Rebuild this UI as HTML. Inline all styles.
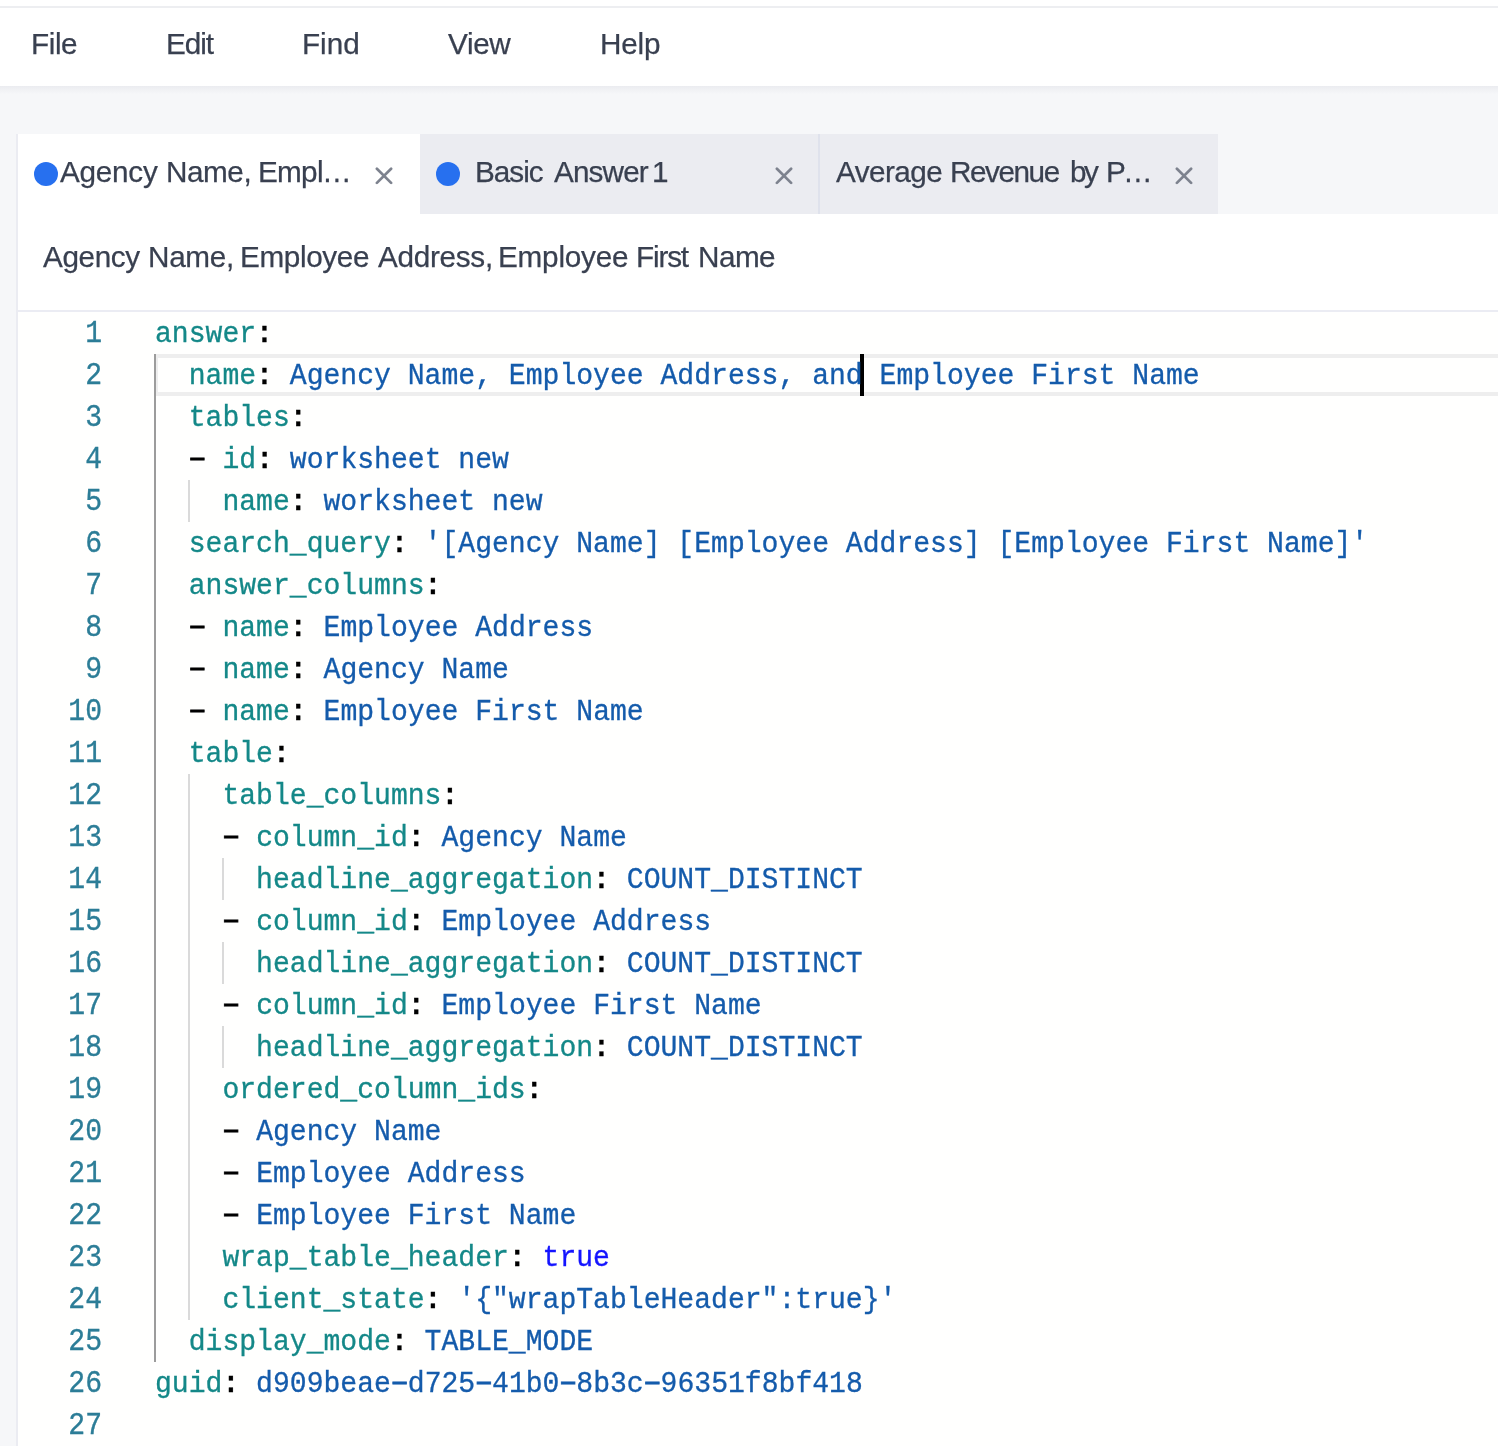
<!DOCTYPE html>
<html><head><meta charset="utf-8"><title>TML Editor</title>
<style>
html,body{margin:0;padding:0}
body{width:1498px;height:1446px;overflow:hidden;position:relative;background:#f6f7f9;font-family:"Liberation Sans",sans-serif;color:#363c4a}
div{position:absolute;box-sizing:border-box}
.menubar{left:0;top:0;width:1498px;height:86px;background:#fff}
.topline{left:0;top:6px;width:1498px;height:2px;background:#edeef1}
.menushadow{left:0;top:86px;width:1498px;height:8px;background:linear-gradient(#ebecf0,#f6f7f9)}
.panel{left:18px;top:214px;width:1480px;height:1232px;background:#fff}
.lborder{left:16px;top:134px;width:2px;height:1312px;background:#ebecf2}
.tab{top:134px;height:80px;background:#ebecf1}
.tab.act{background:#fff}
.dot{width:24px;height:24px;border-radius:50%;background:#2770ef;top:162px}
.tdiv{left:818px;top:134px;width:2px;height:80px;background:#dfe2ec}
.hline{left:18px;top:310px;width:1480px;height:2px;background:#ebecf3}
.edbg{left:18px;top:312px;width:1480px;height:1134px;background:#fffffe}
svg.x{position:absolute;width:18px;height:18px}
.curline{left:154px;top:354px;width:1344px;height:42px;border:4px solid #eeeeee;border-right:0}
.cursor{left:860px;top:354px;width:4px;height:42px;background:#000}
.g{width:2px}
.ga{background:#9c9c9c}
.gn{background:#dadada}
.sw,.ln,.cl{will-change:transform}
.sw{height:40px;line-height:40px;font-size:29.7px;white-space:pre;color:#394050;-webkit-text-stroke:.25px}
.ln,.cl{font-family:"Liberation Mono",monospace;font-size:28.09px;line-height:42px;height:42px;white-space:pre;transform:translateY(1.6px) scaleY(1.07);transform-origin:0 28.5px;-webkit-text-stroke:0.3px}
.ln{left:41px;width:61px;text-align:right;color:#2c7d97;transform:translateY(1.6px) scaleY(1.14)}
.cl{left:154.5px;color:#000}
.k{color:#148888}.s{color:#145bab}.w{color:#1414ff}.p{color:#000;font-weight:bold}
.cl i{font-style:normal;font-weight:normal;position:relative;top:1.4px;-webkit-text-stroke:.8px}

</style></head>
<body>
<div class="menubar"></div>
<div class="topline"></div>
<div class="menushadow"></div>
<div class="lborder"></div>
<div class="tab act" style="left:18px;width:402px"></div>
<div class="tab" style="left:420px;width:798px"></div>
<div class="tdiv"></div>
<div class="dot" style="left:34px"></div>
<svg class="x" style="left:375.3px;top:167px" viewBox="0 0 18 18"><path d="M1.9 1.7 L16.1 15.9 M16.1 1.7 L1.9 15.9" stroke="#7d828e" stroke-width="2.7" stroke-linecap="round" fill="none"/></svg>
<div class="dot" style="left:436px"></div>
<svg class="x" style="left:775.3px;top:167px" viewBox="0 0 18 18"><path d="M1.9 1.7 L16.1 15.9 M16.1 1.7 L1.9 15.9" stroke="#7d828e" stroke-width="2.7" stroke-linecap="round" fill="none"/></svg>
<svg class="x" style="left:1175px;top:167px" viewBox="0 0 18 18"><path d="M1.9 1.7 L16.1 15.9 M16.1 1.7 L1.9 15.9" stroke="#7d828e" stroke-width="2.7" stroke-linecap="round" fill="none"/></svg>
<div class="panel"></div>
<div class="hline"></div>
<div class="edbg"></div>
<div class="curline"></div>
<div class="cursor"></div>

<div class="sw" style="left:31.40px;top:24.01px;letter-spacing:-0.41px">File</div>
<div class="sw" style="left:165.50px;top:24.01px;letter-spacing:-1.04px">Edit</div>
<div class="sw" style="left:302.40px;top:24.01px;letter-spacing:-0.01px">Find</div>
<div class="sw" style="left:448.00px;top:24.01px;letter-spacing:-0.36px">View</div>
<div class="sw" style="left:599.60px;top:24.01px;letter-spacing:-0.22px">Help</div>
<div class="sw" style="left:59.50px;top:151.91px;letter-spacing:-0.24px">Agency</div>
<div class="sw" style="left:166.20px;top:151.91px;letter-spacing:-0.45px">Name,</div>
<div class="sw" style="left:257.80px;top:151.91px;letter-spacing:-0.71px">Empl</div>
<div class="sw" style="left:322.05px;top:151.91px;letter-spacing:0.00px">…</div>
<div class="sw" style="left:475.40px;top:151.91px;letter-spacing:-0.99px">Basic</div>
<div class="sw" style="left:553.50px;top:151.91px;letter-spacing:-0.86px">Answer</div>
<div class="sw" style="left:652.00px;top:151.91px;letter-spacing:0.00px">1</div>
<div class="sw" style="left:836.00px;top:151.91px;letter-spacing:-0.54px">Average</div>
<div class="sw" style="left:950.20px;top:151.91px;letter-spacing:-1.45px">Revenue</div>
<div class="sw" style="left:1070.00px;top:151.91px;letter-spacing:-2.51px">by</div>
<div class="sw" style="left:1105.85px;top:151.91px;letter-spacing:0.00px">P</div>
<div class="sw" style="left:1122.70px;top:151.91px;letter-spacing:0.00px">…</div>
<div class="sw" style="left:42.70px;top:236.71px;letter-spacing:-0.38px">Agency</div>
<div class="sw" style="left:148.00px;top:236.71px;letter-spacing:-0.30px">Name,</div>
<div class="sw" style="left:239.60px;top:236.71px;letter-spacing:-0.37px">Employee</div>
<div class="sw" style="left:377.80px;top:236.71px;letter-spacing:-0.29px">Address,</div>
<div class="sw" style="left:498.00px;top:236.71px;letter-spacing:-0.21px">Employee</div>
<div class="sw" style="left:636.00px;top:236.71px;letter-spacing:-1.16px">First</div>
<div class="sw" style="left:697.60px;top:236.71px;letter-spacing:-0.53px">Name</div>
<div class="g ga" style="left:154px;top:354px;height:1008px"></div>
<div class="g gn" style="left:188px;top:480px;height:42px"></div>
<div class="g gn" style="left:188px;top:774px;height:546px"></div>
<div class="g gn" style="left:222px;top:858px;height:42px"></div>
<div class="g gn" style="left:222px;top:942px;height:42px"></div>
<div class="g gn" style="left:222px;top:1026px;height:42px"></div>
<div class="ln" style="top:312px">1</div>
<div class="cl" style="top:312px"><span class="k">answer</span><span class="p">:</span></div>
<div class="ln" style="top:354px">2</div>
<div class="cl" style="top:354px"><span class="p">  </span><span class="k">name</span><span class="p">: </span><span class="s">Agency Name, Employee Address, and Employee First Name</span></div>
<div class="ln" style="top:396px">3</div>
<div class="cl" style="top:396px"><span class="p">  </span><span class="k">tables</span><span class="p">:</span></div>
<div class="ln" style="top:438px">4</div>
<div class="cl" style="top:438px"><span class="p">  <i>−</i> </span><span class="k">id</span><span class="p">: </span><span class="s">worksheet new</span></div>
<div class="ln" style="top:480px">5</div>
<div class="cl" style="top:480px"><span class="p">    </span><span class="k">name</span><span class="p">: </span><span class="s">worksheet new</span></div>
<div class="ln" style="top:522px">6</div>
<div class="cl" style="top:522px"><span class="p">  </span><span class="k">search_query</span><span class="p">: </span><span class="s">'[Agency Name] [Employee Address] [Employee First Name]'</span></div>
<div class="ln" style="top:564px">7</div>
<div class="cl" style="top:564px"><span class="p">  </span><span class="k">answer_columns</span><span class="p">:</span></div>
<div class="ln" style="top:606px">8</div>
<div class="cl" style="top:606px"><span class="p">  <i>−</i> </span><span class="k">name</span><span class="p">: </span><span class="s">Employee Address</span></div>
<div class="ln" style="top:648px">9</div>
<div class="cl" style="top:648px"><span class="p">  <i>−</i> </span><span class="k">name</span><span class="p">: </span><span class="s">Agency Name</span></div>
<div class="ln" style="top:690px">10</div>
<div class="cl" style="top:690px"><span class="p">  <i>−</i> </span><span class="k">name</span><span class="p">: </span><span class="s">Employee First Name</span></div>
<div class="ln" style="top:732px">11</div>
<div class="cl" style="top:732px"><span class="p">  </span><span class="k">table</span><span class="p">:</span></div>
<div class="ln" style="top:774px">12</div>
<div class="cl" style="top:774px"><span class="p">    </span><span class="k">table_columns</span><span class="p">:</span></div>
<div class="ln" style="top:816px">13</div>
<div class="cl" style="top:816px"><span class="p">    <i>−</i> </span><span class="k">column_id</span><span class="p">: </span><span class="s">Agency Name</span></div>
<div class="ln" style="top:858px">14</div>
<div class="cl" style="top:858px"><span class="p">      </span><span class="k">headline_aggregation</span><span class="p">: </span><span class="s">COUNT_DISTINCT</span></div>
<div class="ln" style="top:900px">15</div>
<div class="cl" style="top:900px"><span class="p">    <i>−</i> </span><span class="k">column_id</span><span class="p">: </span><span class="s">Employee Address</span></div>
<div class="ln" style="top:942px">16</div>
<div class="cl" style="top:942px"><span class="p">      </span><span class="k">headline_aggregation</span><span class="p">: </span><span class="s">COUNT_DISTINCT</span></div>
<div class="ln" style="top:984px">17</div>
<div class="cl" style="top:984px"><span class="p">    <i>−</i> </span><span class="k">column_id</span><span class="p">: </span><span class="s">Employee First Name</span></div>
<div class="ln" style="top:1026px">18</div>
<div class="cl" style="top:1026px"><span class="p">      </span><span class="k">headline_aggregation</span><span class="p">: </span><span class="s">COUNT_DISTINCT</span></div>
<div class="ln" style="top:1068px">19</div>
<div class="cl" style="top:1068px"><span class="p">    </span><span class="k">ordered_column_ids</span><span class="p">:</span></div>
<div class="ln" style="top:1110px">20</div>
<div class="cl" style="top:1110px"><span class="p">    <i>−</i> </span><span class="s">Agency Name</span></div>
<div class="ln" style="top:1152px">21</div>
<div class="cl" style="top:1152px"><span class="p">    <i>−</i> </span><span class="s">Employee Address</span></div>
<div class="ln" style="top:1194px">22</div>
<div class="cl" style="top:1194px"><span class="p">    <i>−</i> </span><span class="s">Employee First Name</span></div>
<div class="ln" style="top:1236px">23</div>
<div class="cl" style="top:1236px"><span class="p">    </span><span class="k">wrap_table_header</span><span class="p">: </span><span class="w">true</span></div>
<div class="ln" style="top:1278px">24</div>
<div class="cl" style="top:1278px"><span class="p">    </span><span class="k">client_state</span><span class="p">: </span><span class="s">'{"wrapTableHeader":true}'</span></div>
<div class="ln" style="top:1320px">25</div>
<div class="cl" style="top:1320px"><span class="p">  </span><span class="k">display_mode</span><span class="p">: </span><span class="s">TABLE_MODE</span></div>
<div class="ln" style="top:1362px">26</div>
<div class="cl" style="top:1362px"><span class="k">guid</span><span class="p">: </span><span class="s">d909beae<i>−</i>d725<i>−</i>41b0<i>−</i>8b3c<i>−</i>96351f8bf418</span></div>
<div class="ln" style="top:1404px">27</div>
</body></html>
